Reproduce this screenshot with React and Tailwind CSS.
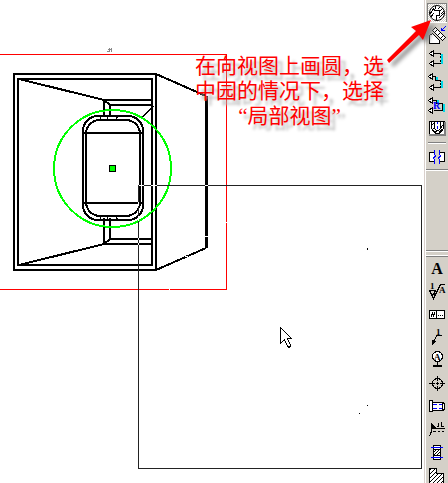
import React from 'react'

const CircleViewIcon = () => (
  <>
    <rect x="0.5" y="0.5" width="19" height="19" fill="url(#dither)" stroke="#808080" />
    <path d="M0.5 19.5H20" stroke="#fff" />
    <circle cx="10" cy="10" r="7.5" fill="#fff" shapeRendering="auto" />
    <path d="M9 3L7.5 7.5H12.5V12.5H9.5V17" />
    <path d="M11 6L14 3M13 8L16 5M14 11L17 8M12 15L17 10M3 11L7 5M4 14L7 10" />
  </>
)

const AuxViewIcon = () => (
  <>
    <path d="M2.5 17.5V9.5L5.5 7.5L12.5 14.5V17.5Z" fill="#fff" />
    <path d="M5.5 4.5L8.5 1.5L18.5 11.5L15.5 14.5Z" fill="#fff" />
    <path d="M7.5 6.5L9.5 4.5M10.5 9.5L12.5 7.5M13.5 12.5L15.5 10.5" />
    <path d="M18.5 0.5L14.5 4.5M14.5 1.5V4.5H17.5" stroke="#0000ff" />
  </>
)

const SectionIcon = () => (
  <>
    <path d="M14.5 5V15" stroke="#00d8e8" strokeWidth="2" />
    <path d="M7 4.5H13.5V6M13.5 7V9M13.5 11V13M7 14.5H13.5" />
    <path d="M2.5 4.5L6.5 1.5V7.5ZM2.5 14.5L6.5 11.5V17.5Z" fill="#fff" />
  </>
)

const StepSectionIcon = () => (
  <>
    <path d="M9.5 5V9M14.5 9V16" stroke="#00d8e8" strokeWidth="2" />
    <path d="M6 4.5H8.5V8.5H13.5V10M13.5 11V13M7 15.5H13.5V14" />
    <path d="M1.5 4.5L5.5 1.5V7.5ZM2.5 15.5L6.5 12.5V18.5Z" fill="#fff" />
  </>
)

const RotateSectionIcon = () => (
  <>
    <path d="M11 5V8M17 9V17" stroke="#00d8e8" strokeWidth="2" />
    <path d="M6 5.5H9.5V8.5H15.5V15.5H7" />
    <path d="M1.5 5.5L5.5 2.5V8.5ZM1.5 15.5L5.5 12.5V18.5Z" fill="#fff" />
    <text x="6" y="14" fontSize="10" fill="#0000ff" stroke="none" className="font-bold">R</text>
  </>
)

const BrokenOutIcon = () => (
  <>
    <rect x="2.5" y="3.5" width="15" height="13" fill="#fff" stroke="none" />
    <path d="M2.5 17V3.5H18" />
    <path d="M2 17H18V4" stroke="#808080" strokeWidth="2" />
    <path d="M4.5 4V10.5L8.5 15.5H12.5L16.5 10.5V4" />
    <path d="M7.5 4V10.5L9.5 12.5H11.5L13.5 10.5V4" />
    <path d="M4 8L7 5M5 12L8 9M8 15L10 12M12 15L15 11M13 11L16 7" />
    <path d="M10.5 4V6M10.5 8V11" stroke="#0000ff" />
  </>
)

const BreakViewIcon = () => (
  <>
    <path d="M7 5.5H2.5V14.5H7M13 5.5H17.5V14.5H13" fill="#fff" />
    <path d="M7.5 3V7L8.5 9L6.5 11L7.5 13V17M12.5 3V7L13.5 9L11.5 11L12.5 13V17" stroke="#0000ff" />
  </>
)

const RoughnessIcon = () => (
  <>
    <text x="3" y="8" fontSize="9" fill="#000" stroke="none" className="font-bold">1</text>
    <path d="M2 9.5H9M2.5 9.5L6.5 17.5L13.5 3.5H18M4.5 13.5H8.5M8.5 9.5L6.5 13.5" />
    <text x="12" y="12" fontSize="9" fill="#000" stroke="none" className="font-bold">A</text>
  </>
)

const ToleranceIcon = () => (
  <>
    <rect x="2.5" y="6.5" width="15" height="8" fill="#fff" />
    <path d="M9.5 7V14M4 13L6 8M6 13L8 8M11 11.5H12M13 11.5H14M15 11.5H16" />
  </>
)

const LeaderIcon = () => (
  <>
    <text x="9" y="8" fontSize="9" fill="#000" stroke="none" className="font-bold">1</text>
    <path d="M15 8.5H9.5L6.5 15.5" />
    <path d="M5.5 17.5V13.5L8.5 14.5Z" fill="#000" />
  </>
)

const DatumIcon = () => (
  <>
    <circle cx="10.5" cy="6.5" r="5" fill="#fff" />
    <text x="7" y="10" fontSize="9" fill="#000" stroke="none" className="font-bold">A</text>
    <path d="M10.5 12V15" />
    <path d="M6 16H15" strokeWidth="2" />
  </>
)

const CenterMarkIcon = () => (
  <>
    <circle cx="10.5" cy="10.5" r="5" />
    <path d="M2 10.5H8M9 10.5H12M13 10.5H18M10.5 3V8M10.5 9V12M10.5 13V18" />
  </>
)

const ThreadIcon = () => (
  <>
    <path d="M5.5 6.5H16.5L17.5 8.5V12.5L16.5 14.5H5.5Z" fill="#fff" />
    <rect x="2.5" y="4.5" width="3" height="11" fill="#fff" />
    <path d="M15.5 6V14" />
    <path d="M6 8.5H10M12 8.5H15M6 12.5H10M12 12.5H15" stroke="#0000ff" />
  </>
)

const WeldIcon = () => (
  <>
    <path d="M4.5 4V12M4.5 12.5L2.5 17M4 9.5H18M6 12.5H9M11 12.5H13M15 12.5H17" />
    <path d="M4.5 4.5L8.5 8.5H4.5Z" fill="#000" />
    <path d="M10 7.5H11.5V3.5M14.5 3V7.5H17" />
  </>
)

const CenterLineIcon = () => (
  <>
    <rect x="6.5" y="3.5" width="7" height="14" fill="#fff" />
    <path d="M6 7.5H14M6 13.5H14M7 10L9 8M7 13L12 8M10 13L13 10" />
    <path d="M4 5.5H16M4 15.5H16" stroke="#0000ff" />
  </>
)

const HatchIcon = () => (
  <>
    <path d="M2.5 3.5H9.5V8.5H16.5V20H2.5Z" fill="#fff" />
    <path d="M2.5 3.5H9.5V8.5H16.5V20H2.5Z" fill="url(#hatch)" />
  </>
)

const viewTools = [
  { label: '局部视图', icon: CircleViewIcon },
  { label: '辅助视图', icon: AuxViewIcon },
  { label: '剖面视图', icon: SectionIcon },
  { label: '阶梯剖视图', icon: StepSectionIcon },
  { label: '旋转剖视图', icon: RotateSectionIcon },
  { label: '断开的剖视图', icon: BrokenOutIcon }
]

const noteTools = [
  { label: '表面粗糙度', icon: RoughnessIcon },
  { label: '形位公差', icon: ToleranceIcon },
  { label: '引线', icon: LeaderIcon },
  { label: '基准特征', icon: DatumIcon },
  { label: '中心符号线', icon: CenterMarkIcon },
  { label: '装饰螺纹线', icon: ThreadIcon },
  { label: '焊接符号', icon: WeldIcon },
  { label: '中心线', icon: CenterLineIcon },
  { label: '区域剖面线', icon: HatchIcon }
]

const ToolButton = ({ label, icon: Icon }) => (
  <button type="button" aria-label={label} className="flex h-[23px] w-full shrink-0 justify-center pt-px">
    <svg
      viewBox="0 0 20 20"
      className="size-5 font-['Liberation_Serif',serif]"
      fill="none"
      stroke="#000"
      shapeRendering="crispEdges"
    >
      <Icon />
    </svg>
  </button>
)

const Toolbar = () => (
  <div className="flex w-6 shrink-0 flex-col overflow-hidden border-l border-[#d9d0cc] bg-[#d4d0c8]">
    <svg className="absolute size-0">
      <defs>
        <pattern id="hatch" width="4" height="4" patternUnits="userSpaceOnUse">
          <path d="M0 4L4 0" stroke="#000" strokeWidth="1" />
        </pattern>
        <pattern id="dither" width="2" height="2" patternUnits="userSpaceOnUse">
          <rect width="2" height="2" fill="#fff" stroke="none" />
          <rect width="1" height="1" fill="#d4d0c8" stroke="none" />
          <rect x="1" y="1" width="1" height="1" fill="#d4d0c8" stroke="none" />
        </pattern>
      </defs>
    </svg>
    <div className="flex flex-1 flex-col border-l border-white">
      <div className="flex shrink-0 flex-col pt-0.5">
        {viewTools.map((tool) => (
          <ToolButton key={tool.label} {...tool} />
        ))}
        <div className="mx-0.5 my-0.5 h-0.5 border-t border-b border-t-[#808080] border-b-white" />
        <ToolButton label="断裂视图" icon={BreakViewIcon} />
      </div>
      <div className="h-0.5 shrink-0 border-t border-b border-t-[#808080] border-b-white" />
      <div className="h-[79px] shrink-0" />
      <div className="h-0.5 shrink-0 border-t border-b border-t-[#808080] border-b-white" />
      <div className="mt-[3px] h-0.5 shrink-0 border-t border-b border-t-white border-b-[#808080]" />
      <div className="flex h-0 min-h-0 flex-1 flex-col overflow-hidden">
        <button
          type="button"
          className="flex h-[23px] shrink-0 items-center justify-center font-['Liberation_Serif',serif] text-base leading-none font-bold text-black"
        >
          A
        </button>
        {noteTools.map((tool) => (
          <ToolButton key={tool.label} {...tool} />
        ))}
      </div>
    </div>
  </div>
)

const Drawing = () => (
  <svg width="424" height="483" viewBox="0 0 424 483" fill="none" shapeRendering="crispEdges">
    <path d="M0 54.5H226.5V289.5H0" stroke="#ff0000" />
    <path d="M107 51.5H109M108 49.5H112M109.5 48V52M111.5 48V52" stroke="#888" />

    {/* case */}
    <g stroke="#000" strokeWidth="2">
      <rect x="14" y="74" width="142" height="196" />
      <rect x="18" y="79" width="134" height="186" />
      <path d="M19 79L104 100H152M104 100V117M104 100L110 105H152M110 105V117" />
      <path d="M19 265L104 244H152M104 244V218M104 244L110 239H152M110 239V218" />
      <path d="M156 74L206 96M206 248L156 270" />
      <path d="M206.5 96V248" strokeWidth="3" />
      <rect x="83" y="116" width="60" height="104" rx="15" />
      <rect x="86" y="120" width="54" height="96" rx="14" />
      <path d="M83 133H143M83 203H143" />
    </g>
    <path d="M142.5 117L153.5 106M100.5 116V120M107.5 116V120M115.5 120L118 116M100.5 216V220M107.5 216V220M115.5 216L118 220" stroke="#000" />

    {/* selected circle */}
    <circle cx="112.5" cy="168.5" r="58.5" stroke="#00ff00" strokeWidth="2" />
    <rect x="109.5" y="165.5" width="6" height="6" fill="#00ff00" stroke="#000" />

    {/* new view */}
    <rect x="138.5" y="185.5" width="283" height="283" stroke="#222" />
    <path d="M139 185.5H144M151 185.5H157M205 185.5H208M138.5 202V206M138.5 216V221M138.5 238V240M138.5 243V245" stroke="#fff" />
    <path d="M226 222.5H227M205 236.5H208M169 289.5H170M185 256.5H188" stroke="#fff" />
    <path d="M367.5 248V250M367 405.5H368M359 413.5H360" stroke="#000" />
    <path
      d="M280.5 327.5V343.5L284.5 339.5L287.5 346.5L289.5 347.5L290.5 345.5L287.5 338.5H291.5Z"
      fill="#fff"
      stroke="#000"
    />
  </svg>
)

const App = () => {
  return (
    <div className="flex h-screen overflow-hidden bg-white">
      <main className="relative min-w-0 flex-1">
        <Drawing />
        <p className="absolute top-[54px] left-[195px] text-center font-['Liberation_Serif','Noto_Sans_CJK_SC',sans-serif] text-[21px] leading-[25px] whitespace-nowrap text-[#ff0000] [text-shadow:5px_5px_3px_#bbb]">
          在向视图上画圆，选
          <br />
          中园的情况下，选择
          <br />
          “局部视图”
        </p>
      </main>
      <Toolbar />
      <svg
        width="60"
        height="60"
        viewBox="0 0 60 60"
        className="pointer-events-none absolute top-3 left-[380px] overflow-visible drop-shadow-[4px_4px_2px_#888]"
      >
        <path d="M51 8L31 15L36 19L7 48L9 51L39 23L43 28Z" fill="#ff0000" />
      </svg>
    </div>
  )
}

export default App
